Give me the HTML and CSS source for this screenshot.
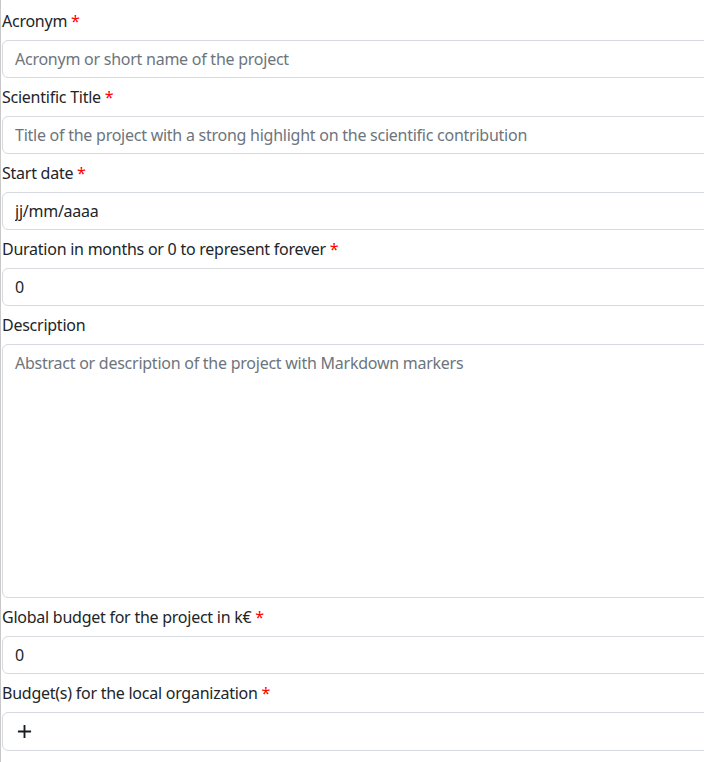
FILE: index.html
```html
<!DOCTYPE html>
<html lang="en">
<head>
<meta charset="utf-8">
<title>Project form</title>
<link rel="stylesheet" href="styles.css">
</head>
<body>
<form class="form">
  <label class="form-label" for="acronym">Acronym <span class="req">*</span></label>
  <input class="form-control" id="acronym" type="text" placeholder="Acronym or short name of the project">

  <label class="form-label" for="title">Scientific Title <span class="req">*</span></label>
  <input class="form-control" id="title" type="text" placeholder="Title of the project with a strong highlight on the scientific contribution">

  <label class="form-label" for="start">Start date <span class="req">*</span></label>
  <input class="form-control" id="start" type="text" value="jj/mm/aaaa">

  <label class="form-label" for="duration">Duration in months or 0 to represent forever <span class="req">*</span></label>
  <input class="form-control" id="duration" type="text" value="0">

  <label class="form-label" for="description">Description</label>
  <textarea class="form-control textarea" id="description" placeholder="Abstract or description of the project with Markdown markers"></textarea>

  <label class="form-label" for="budget">Global budget for the project in k€ <span class="req">*</span></label>
  <input class="form-control" id="budget" type="text" value="0">

  <label class="form-label">Budget(s) for the local organization <span class="req">*</span></label>
  <div class="budget-box">
    <button type="button" class="add-btn" aria-label="Add">
      <svg width="16" height="16" viewBox="0 0 16 16" fill="none" stroke="currentColor" stroke-width="2"><path d="M8 1v14M1 8h14"/></svg>
    </button>
  </div>
</form>
</body>
</html>
```
FILE: styles.css
```css
html, body {
  margin: 0;
  padding: 0;
  background: #fff;
  overflow: hidden;
}
body {
  font-family: "Noto Sans", "DejaVu Sans", sans-serif;
  font-size: 16px;
  letter-spacing: -0.25px;
  color: #212529;
}
.form {
  display: flex;
  flex-direction: column;
  width: 730px;
  padding: 2px 0 0 1px;
  border-left: 1px solid #c9c9c9;
  min-height: 762px;
  box-sizing: border-box;
}
.form-label {
  display: block;
  padding: 7px 0;
  line-height: 24px;
  height: 38px;
  box-sizing: border-box;
  white-space: nowrap;
}
.req {
  color: #ff0000;
}
.form-control {
  display: block;
  box-sizing: border-box;
  width: 100%;
  height: 38px;
  margin: 0;
  padding: 6px 12px;
  font: inherit;
  letter-spacing: inherit;
  line-height: 24px;
  color: #212529;
  background: #fff;
  border: 1px solid #d6d9dd;
  border-radius: 6px;
  outline: none;
}
.form-control::placeholder {
  color: #6c757d;
  opacity: 1;
}
.textarea {
  height: 254px;
  resize: none;
}
.budget-box {
  height: 39px;
  box-sizing: border-box;
  border: 1px solid #d6d9dd;
  border-radius: 6px;
  display: flex;
  align-items: center;
  padding-left: 11px;
}
.add-btn {
  background: none;
  border: 0;
  padding: 0;
  width: 20px;
  height: 20px;
  display: flex;
  align-items: center;
  justify-content: center;
  color: #1a1d20;
}
.add-btn svg {
  width: 15px;
  height: 15px;
}
```
